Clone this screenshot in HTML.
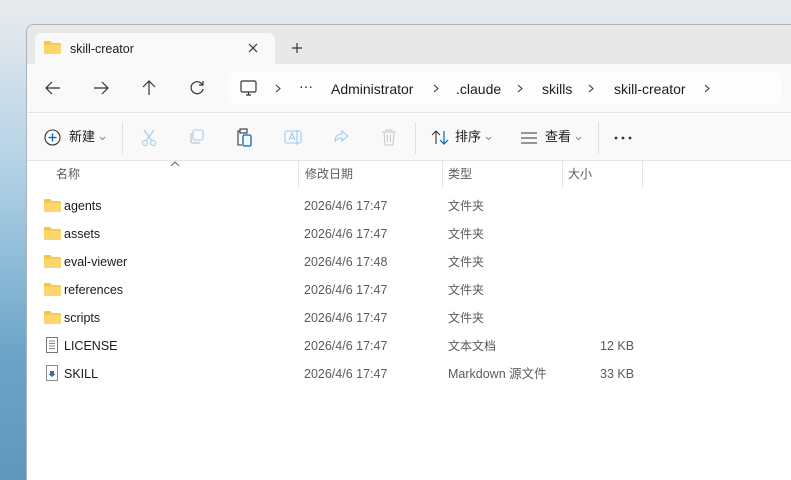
<!DOCTYPE html>
<html><head><meta charset="utf-8"><style>
*{margin:0;padding:0;box-sizing:border-box}
html,body{width:791px;height:480px;overflow:hidden}
body{position:relative;font-family:"Liberation Sans","Noto Sans CJK SC",sans-serif;line-height:16px;
background:linear-gradient(180deg,#e6ebee 0%,#dfe6ec 8%,#c9dcea 20%,#b3d2e6 35%,#8dbbd8 55%,#6aa3c6 75%,#5e98bc 100%);}
span{line-height:16px}
.win{position:absolute;left:26px;top:24px;width:800px;height:456px;background:#fff;border-radius:8px 0 0 0;border-left:1px solid #a9b2ba;border-top:1px solid #a9b2ba;overflow:hidden}
.tabbar{position:absolute;left:0;top:0;right:0;height:39px;background:#e8e8e8}
.tab{position:absolute;left:8px;top:8px;width:240px;height:32px;background:#f9f9f9;border-radius:7px 7px 0 0}
.nav{position:absolute;left:0;top:39px;right:0;height:49px;background:#f9f9f9;border-bottom:1px solid #e5e5e5}
.addr{position:absolute;left:201px;top:8px;width:553px;height:32px;background:#fdfdfd;border-radius:5px;font-size:14px;color:#1b1b1b}
.addr span{position:absolute;top:8px}
.tool{position:absolute;left:0;top:89px;right:0;height:47px;background:#f9f9f9;border-bottom:1px solid #e5e5e5;font-size:13px;color:#1b1b1b}
.tool .t{position:absolute;top:15px}
.sep{position:absolute;top:8px;width:1px;height:32px;background:#e0e0e0}
.hdr{position:absolute;top:136px;left:0;right:0;height:27px;font-size:12px;color:#5b5b5b}
.hdr span{position:absolute;top:5px}
.hdr i{position:absolute;top:0;width:1px;height:27px;background:#e5e5e5}
.row{position:absolute;left:0;height:28px;font-size:12.5px;color:#1b1b1b;width:700px}
.row span{position:absolute;top:6px}
.row .g{color:#5b5b5b}
.fold{position:absolute;left:17px;top:7px;width:17px;height:13px}
svg{position:absolute}
.ch{font-size:12px}
</style></head><body>
<div class="win">
 <div class="tabbar">
  <div class="tab">
   <svg style="left:9px;top:8px" width="17" height="13" viewBox="0 0 17 13"><path d="M0 1.5Q0 0 1.5 0H6l2 2h7.5Q17 2 17 3.5V11.5Q17 13 15.5 13H1.5Q0 13 0 11.5Z" fill="#f6c443"/><rect x="0" y="3.5" width="17" height="9.5" rx="1.3" fill="#fbd66d"/></svg>
   <span style="position:absolute;left:35px;top:8px;font-size:12.5px;color:#1b1b1b">skill-creator</span>
   <svg style="left:212px;top:9px" width="12" height="12"><path d="M2 2L10 10M10 2L2 10" stroke="#333" stroke-width="1.2"/></svg>
  </div>
  <svg style="left:264px;top:17px" width="12" height="12"><path d="M6 1V11M1 6H11" stroke="#333" stroke-width="1.2"/></svg>
 </div>
 <div class="nav">
  <svg style="left:18px;top:17px" width="16" height="14"><path d="M1 7H15M7 1L1 7L7 13" fill="none" stroke="#333" stroke-width="1.2"/></svg>
  <svg style="left:66px;top:17px" width="16" height="14"><path d="M1 7H15M9 1L15 7L9 13" fill="none" stroke="#333" stroke-width="1.2"/></svg>
  <svg style="left:115px;top:16px" width="14" height="16"><path d="M7 15V1M1 7L7 1L13 7" fill="none" stroke="#333" stroke-width="1.2"/></svg>
  <svg style="left:163px;top:16px" width="15" height="15"><path d="M12.5 5A6 6 0 1 0 13 9M13 1V5H9" fill="none" stroke="#333" stroke-width="1.2"/></svg>
  <div class="addr">
   <svg style="left:12px;top:8px" width="17" height="17"><rect x="1" y="1" width="15" height="11" rx="1.5" fill="none" stroke="#333" stroke-width="1.2"/><path d="M6 15H11M8.5 12V15" stroke="#333" stroke-width="1.2"/></svg>
   <svg style="left:47px;top:12px" width="6" height="9"><path d="M1 1L5 4.5L1 8" fill="none" stroke="#333"/></svg>
   <span style="left:71px;top:6px">···</span>
   <span style="left:103px;top:9px">Administrator</span>
   <svg style="left:205px;top:12px" width="6" height="9"><path d="M1 1L5 4.5L1 8" fill="none" stroke="#333"/></svg>
   <span style="left:228px;top:9px">.claude</span>
   <svg style="left:289px;top:12px" width="6" height="9"><path d="M1 1L5 4.5L1 8" fill="none" stroke="#333"/></svg>
   <span style="left:314px;top:9px">skills</span>
   <svg style="left:360px;top:12px" width="6" height="9"><path d="M1 1L5 4.5L1 8" fill="none" stroke="#333"/></svg>
   <span style="left:386px;top:9px">skill-creator</span>
   <svg style="left:476px;top:12px" width="6" height="9"><path d="M1 1L5 4.5L1 8" fill="none" stroke="#333"/></svg>
  </div>
 </div>
 <div class="tool">
  <svg style="left:17px;top:15px" width="17" height="17"><circle cx="8.5" cy="8.5" r="7.5" fill="none" stroke="#333" stroke-width="1.1"/><path d="M8.5 4.5V12.5M4.5 8.5H12.5" stroke="#0067c0" stroke-width="1.3"/></svg>
  <span class="t" style="left:42px">新建</span>
  <svg style="left:72px;top:22px" width="7" height="5"><path d="M1 1L3.5 3.5L6 1" fill="none" stroke="#888"/></svg>
  <div class="sep" style="left:95px"></div>
  <svg style="left:114px;top:15px" width="16" height="18"><path d="M3 1L11 12M13 1L5 12" stroke="#9ccbee" stroke-width="1.1"/><circle cx="4" cy="14" r="2.5" fill="none" stroke="#9ccbee"/><circle cx="12" cy="14" r="2.5" fill="none" stroke="#9ccbee"/></svg>
  <svg style="left:162px;top:15px" width="16" height="16"><rect x="4" y="1" width="10" height="10" rx="2" fill="none" stroke="#9ccbee" stroke-width="1.1"/><path d="M2 4V12Q2 14 4 14H11" fill="none" stroke="#b9b9b9" stroke-width="1.1"/></svg>
  <svg style="left:209px;top:14px" width="16" height="19"><path d="M4 3H2V17H6" fill="none" stroke="#333" stroke-width="1.1"/><rect x="4" y="1" width="7" height="4" fill="none" stroke="#333" stroke-width="1.1"/><rect x="7" y="7" width="8" height="11" rx="1.5" fill="none" stroke="#0067c0" stroke-width="1.3"/></svg>
  <svg style="left:257px;top:15px" width="18" height="17"><rect x="1" y="2" width="16" height="12" rx="2" fill="none" stroke="#9ccbee" stroke-width="1.1"/><path d="M5 11L8 4L11 11M6 9H10M13 1V16" stroke="#9ccbee" stroke-width="1.1" fill="none"/></svg>
  <svg style="left:306px;top:15px" width="17" height="16"><path d="M9 2L15 7L9 12V9Q4 9 2 13Q2 5 9 5Z" fill="none" stroke="#9ccbee" stroke-width="1.1"/></svg>
  <svg style="left:354px;top:14px" width="16" height="18"><path d="M1 4H15M5 4V2H11V4M3 4L4 17H12L13 4M6.5 7V14M9.5 7V14" fill="none" stroke="#c8c8c8" stroke-width="1.1"/></svg>
  <div class="sep" style="left:388px"></div>
  <svg style="left:404px;top:16px" width="18" height="15"><path d="M5 14V1M1 5L5 1L9 5" fill="none" stroke="#333" stroke-width="1.1"/><path d="M13 1V14M9 10L13 14L17 10" fill="none" stroke="#0067c0" stroke-width="1.2"/></svg>
  <span class="t" style="left:428px">排序</span>
  <svg style="left:458px;top:22px" width="7" height="5"><path d="M1 1L3.5 3.5L6 1" fill="none" stroke="#888"/></svg>
  <svg style="left:494px;top:18px" width="16" height="12"><path d="M0 1H16M0 6H16M0 11H16" stroke="#333" stroke-width="1.1"/></svg>
  <span class="t" style="left:518px">查看</span>
  <svg style="left:548px;top:22px" width="7" height="5"><path d="M1 1L3.5 3.5L6 1" fill="none" stroke="#888"/></svg>
  <div class="sep" style="left:571px"></div>
  <svg style="left:587px;top:22px" width="18" height="4"><circle cx="2" cy="2" r="1.4" fill="#333"/><circle cx="9" cy="2" r="1.4" fill="#333"/><circle cx="16" cy="2" r="1.4" fill="#333"/></svg>
 </div>
 <div class="hdr">
  <span style="left:29px">名称</span>
  <svg style="left:143px;top:0px" width="10" height="6"><path d="M1 5L5 1L9 5" fill="none" stroke="#666"/></svg>
  <i style="left:271px"></i><span style="left:278px">修改日期</span>
  <i style="left:415px"></i><span style="left:421px">类型</span>
  <i style="left:535px"></i><span style="left:541px">大小</span>
  <i style="left:615px"></i>
 </div>
</div>
<div style="position:absolute;left:27px;top:25px;width:764px;height:455px;overflow:hidden;pointer-events:none">
 <div class="row" style="top:167px"><svg class="fold" viewBox="0 0 17 13"><path d="M0 1.5Q0 0 1.5 0H6l2 2h7.5Q17 2 17 3.5V11.5Q17 13 15.5 13H1.5Q0 13 0 11.5Z" fill="#f6c443"/><rect y="3.5" width="17" height="9.5" rx="1.3" fill="#fbd66d"/></svg><span style="left:37px">agents</span><span class="g" style="left:277px">2026/4/6 17:47</span><span class="g ch" style="left:421px">文件夹</span></div>
 <div class="row" style="top:195px"><svg class="fold" viewBox="0 0 17 13"><path d="M0 1.5Q0 0 1.5 0H6l2 2h7.5Q17 2 17 3.5V11.5Q17 13 15.5 13H1.5Q0 13 0 11.5Z" fill="#f6c443"/><rect y="3.5" width="17" height="9.5" rx="1.3" fill="#fbd66d"/></svg><span style="left:37px">assets</span><span class="g" style="left:277px">2026/4/6 17:47</span><span class="g ch" style="left:421px">文件夹</span></div>
 <div class="row" style="top:223px"><svg class="fold" viewBox="0 0 17 13"><path d="M0 1.5Q0 0 1.5 0H6l2 2h7.5Q17 2 17 3.5V11.5Q17 13 15.5 13H1.5Q0 13 0 11.5Z" fill="#f6c443"/><rect y="3.5" width="17" height="9.5" rx="1.3" fill="#fbd66d"/></svg><span style="left:37px">eval-viewer</span><span class="g" style="left:277px">2026/4/6 17:48</span><span class="g ch" style="left:421px">文件夹</span></div>
 <div class="row" style="top:251px"><svg class="fold" viewBox="0 0 17 13"><path d="M0 1.5Q0 0 1.5 0H6l2 2h7.5Q17 2 17 3.5V11.5Q17 13 15.5 13H1.5Q0 13 0 11.5Z" fill="#f6c443"/><rect y="3.5" width="17" height="9.5" rx="1.3" fill="#fbd66d"/></svg><span style="left:37px">references</span><span class="g" style="left:277px">2026/4/6 17:47</span><span class="g ch" style="left:421px">文件夹</span></div>
 <div class="row" style="top:279px"><svg class="fold" viewBox="0 0 17 13"><path d="M0 1.5Q0 0 1.5 0H6l2 2h7.5Q17 2 17 3.5V11.5Q17 13 15.5 13H1.5Q0 13 0 11.5Z" fill="#f6c443"/><rect y="3.5" width="17" height="9.5" rx="1.3" fill="#fbd66d"/></svg><span style="left:37px">scripts</span><span class="g" style="left:277px">2026/4/6 17:47</span><span class="g ch" style="left:421px">文件夹</span></div>
 <div class="row" style="top:307px"><svg style="left:19px;top:5px" width="12" height="16"><path d="M0.5 0.5H11.5V15.5H0.5Z" fill="#fff" stroke="#777"/><path d="M3 4H9M3 6.5H9M3 9H9M3 11.5H9" stroke="#888"/></svg><span style="left:37px">LICENSE</span><span class="g" style="left:277px">2026/4/6 17:47</span><span class="g ch" style="left:421px">文本文档</span><span class="g" style="left:573px">12 KB</span></div>
 <div class="row" style="top:335px"><svg style="left:19px;top:5px" width="12" height="16"><path d="M0.5 0.5H11.5V15.5H0.5Z" fill="#fff" stroke="#888"/><path d="M4 6H8V9H9.5L6 12L2.5 9H4Z" fill="#3a6ea5"/></svg><span style="left:37px">SKILL</span><span class="g" style="left:277px">2026/4/6 17:47</span><span class="g" style="left:421px">Markdown 源文件</span><span class="g" style="left:573px">33 KB</span></div>
</div>
</body></html>
